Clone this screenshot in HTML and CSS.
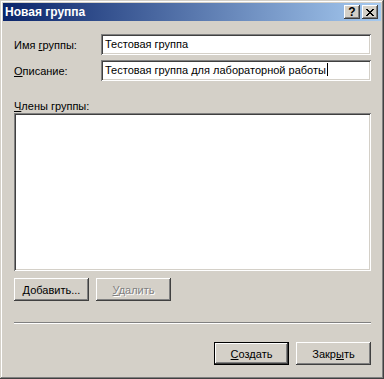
FILE: index.html
```html
<!DOCTYPE html>
<html lang="ru">
<head>
    <meta charset="UTF-8">
    <title>Новая группа</title>
    <link rel="stylesheet" href="styles.css">
</head>
<body>
    <div class="window">
        <div class="titlebar">
            <span class="title">Новая группа</span>
            <div class="caption-buttons">
                <div class="cap-btn help">?</div>
                <div class="cap-btn close">
                    <svg width="8" height="7" viewBox="0 0 8 7">
                        <path d="M0 0h2v1h1v1h2v-1h1v-1h2v1h-1v1h-1v1h-1v1h1v1h1v1h1v1h-2v-1h-1v-1h-2v1h-1v1h-2v-1h1v-1h1v-1h1v-1h-1v-1h-1v-1h-1z" fill="#000"/>
                    </svg>
                </div>
            </div>
        </div>

        <div class="content">
            <div class="field-row">
                <label class="label">Имя <u>г</u>руппы:</label>
                <div class="edit">Тестовая группа</div>
            </div>
            <div class="field-row second">
                <label class="label"><u>О</u>писание:</label>
                <div class="edit">Тестовая группа для лабораторной работы<span class="caret"></span></div>
            </div>

            <div class="list-label"><u>Ч</u>лены группы:</div>
            <div class="listbox"></div>

            <div class="list-buttons">
                <button class="btn"><u>Д</u>обавить...</button>
                <button class="btn" disabled><u>У</u>далить</button>
            </div>

            <div class="separator"></div>

            <div class="dialog-buttons">
                <button class="btn default"><u>С</u>оздать</button>
                <button class="btn">Закр<u>ы</u>ть</button>
            </div>
        </div>
    </div>
</body>
</html>
```

FILE: styles.css
```css
body {
    margin: 0;
    font-family: "Liberation Sans", Arial, sans-serif;
    font-size: 11px;
    color: #000;
}
.window {
    width: 384px;
    height: 379px;
    box-sizing: border-box;
    padding: 3px;
    background: #d4d0c8;
    box-shadow: inset -1px -1px #404040, inset 1px 1px #d4d0c8,
                inset -2px -2px #808080, inset 2px 2px #fff;
}
.titlebar {
    height: 18px;
    display: flex;
    align-items: center;
    justify-content: space-between;
    padding: 0 3px 0 2px;
    background: linear-gradient(to right, #0a246a, #a6caf0);
}
.title {
    color: #fff;
    font-weight: bold;
    font-size: 12px;
}
.caption-buttons {
    display: flex;
    gap: 2px;
}
.cap-btn {
    width: 16px;
    height: 14px;
    box-sizing: border-box;
    background: #d4d0c8;
    box-shadow: inset -1px -1px #404040, inset 1px 1px #fff,
                inset -2px -2px #808080, inset 2px 2px #d4d0c8;
    display: flex;
    align-items: center;
    justify-content: center;
}
.help {
    font-weight: bold;
    font-size: 12px;
    line-height: 14px;
}
.close svg {
    display: block;
}
.content {
    padding: 0 10px 0 11px;
}
.field-row {
    display: flex;
    align-items: center;
    margin-top: 13px;
}
.field-row.second {
    margin-top: 5px;
}
.label {
    width: 87px;
    flex: none;
}
.edit, .listbox {
    box-sizing: border-box;
    background: #fff;
    box-shadow: inset 1px 1px #808080, inset -1px -1px #fff,
                inset 2px 2px #404040, inset -2px -2px #d4d0c8;
}
.edit {
    flex: 1;
    height: 21px;
    line-height: 21px;
    padding: 0 4px;
    white-space: nowrap;
}
.caret {
    display: inline-block;
    width: 1px;
    height: 13px;
    background: #000;
    vertical-align: -2px;
    margin-left: 1px;
}
.list-label {
    margin-top: 19px;
    height: 13px;
    line-height: 13px;
}
.listbox {
    height: 158px;
}
.list-buttons {
    display: flex;
    gap: 7px;
    margin-top: 7px;
}
.btn {
    width: 75px;
    height: 23px;
    box-sizing: border-box;
    padding: 0;
    border: none;
    font-family: inherit;
    font-size: 11px;
    color: #000;
    background: #d4d0c8;
    box-shadow: inset -1px -1px #404040, inset 1px 1px #fff,
                inset -2px -2px #808080, inset 2px 2px #d4d0c8;
}
.btn:disabled {
    color: #808080;
    text-shadow: 1px 1px #fff;
}
.btn.default {
    border: 1px solid #000;
    box-shadow: inset -1px -1px #404040, inset 1px 1px #fff,
                inset -2px -2px #808080, inset 2px 2px #d4d0c8;
}
.separator {
    margin-top: 21px;
    height: 1px;
    background: #808080;
    border-bottom: 1px solid #fff;
}
.dialog-buttons {
    display: flex;
    justify-content: flex-end;
    gap: 7px;
    margin-top: 18px;
}
```
